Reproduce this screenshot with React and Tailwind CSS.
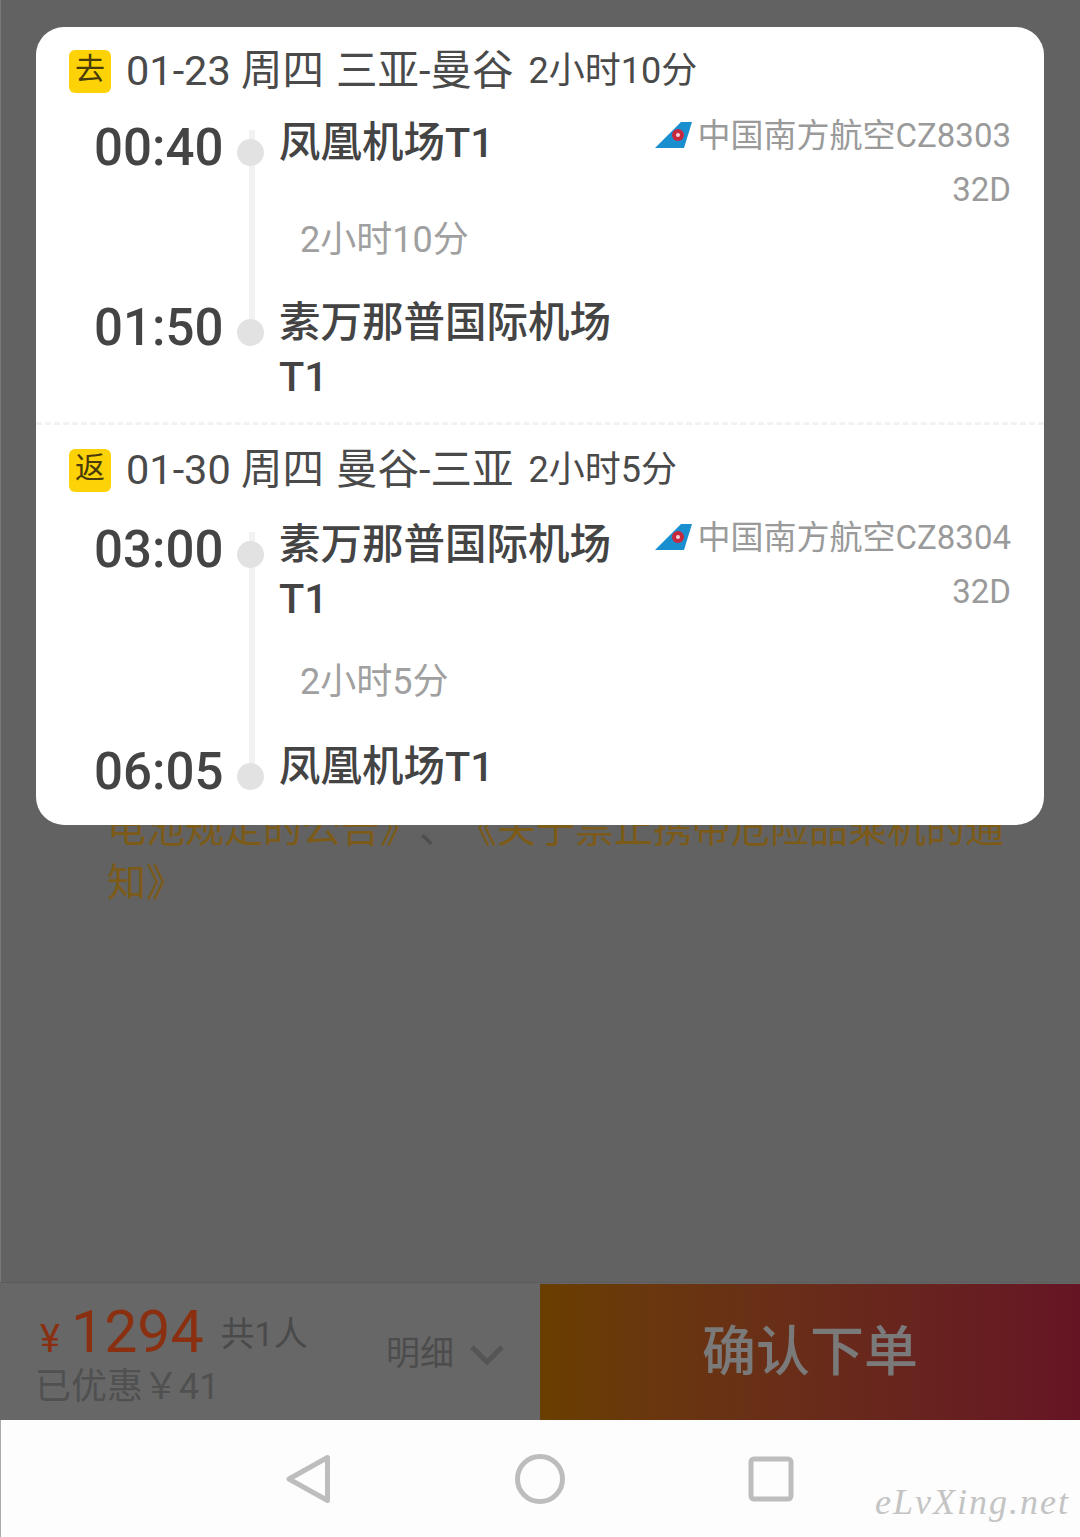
const font = { fontFamily: '"Roboto", "Noto Sans CJK SC", sans-serif' };

function TailLogo() {
    return (
        <svg width="38" height="28" viewBox="0 0 38 28" className="shrink-0">
            <polygon points="26,0 37,0 29,26 0,26" fill="#1a8fd0" />
            <circle cx="23" cy="13" r="6" fill="#c8283c" />
            <circle cx="23" cy="13" r="2" fill="#f4d6da" />
        </svg>
    );
}

function Header({ tag, date, route, duration, className }) {
    return (
        <div className={`flex items-center pl-[33px] h-[44px] ${className}`}>
            <span className="w-[42px] h-[43px] rounded-[6px] bg-[#fdd308] text-[#4a3c08] text-[30px] leading-[38px] flex justify-center shrink-0">{tag}</span>
            <span className="ml-[15px] text-[41.5px] leading-[44px] text-[#4a4a4a] whitespace-nowrap">{date}</span>
            <span className="ml-[12px] text-[41.5px] leading-[44px] text-[#4a4a4a] whitespace-nowrap">{route}</span>
            <span className="ml-[15px] text-[36px] leading-[44px] text-[#4a4a4a] whitespace-nowrap">{duration}</span>
        </div>
    );
}

function Stop({ time, station, carrier, seat }) {
    return (
        <div className="flex items-start">
            <div className="w-[201px] shrink-0 pl-[58px] text-[51px] leading-[64px] font-medium text-[#444444]">{time}</div>
            <div className="w-[42px] pt-[23px] shrink-0">
                <div className="relative w-[27px] h-[27px] rounded-full bg-[#e2e2e2]" />
            </div>
            <div className="w-[350px] shrink-0 text-[41.5px] leading-[54px] font-medium text-[#444444]">{station}</div>
            {carrier && (
                <div className="flex-1 -mt-[7px] pr-[33px] text-[33px] leading-[54px] text-[#9a9a9a] text-right whitespace-nowrap">
                    <div className="flex items-center justify-end gap-[5px] -ml-[40px]"><TailLogo />{carrier}</div>
                    <div>{seat}</div>
                </div>
            )}
        </div>
    );
}

function Leg({ from, to, duration, durationClass, lineClass }) {
    return (
        <div className="relative">
            <div className={`absolute left-[213px] top-[14px] w-[6px] bg-[#f2f2f2] ${lineClass}`} />
            <div className="relative">
                <Stop {...from} />
                <div className={`pl-[264px] text-[36px] leading-[54px] text-[#a0a0a0] ${durationClass}`}>{duration}</div>
                <Stop {...to} />
            </div>
        </div>
    );
}

export default function App() {
    return (
        <div style={font} className="relative w-[1080px] h-[1537px] overflow-hidden flex flex-col bg-[#626262]">
            {/* page behind the dialog */}
            <div className="flex-1 pl-[106px] pr-[70px] pt-[802px] text-[39px] leading-[54px] text-[#7c5a17] border-l border-[#777777] [text-spacing-trim:space-all]">
                电池规定的公告》<span className="text-[#4e4e4e]">、</span>《关于禁止携带危险品乘机的通知》
            </div>

            {/* price bar */}
            <div className="h-[138px] shrink-0 flex bg-[#676767] border-t border-[#5c5c5c]">
                <div className="w-[540px] flex pl-[35px] pt-[19px]">
                    <div className="w-[351px]">
                        <div className="flex items-baseline h-[60px]">
                            <span className="ml-[5px] text-[38px] leading-[60px] text-[#8a3010]">¥</span>
                            <span className="ml-[11px] text-[59px] leading-[60px] text-[#8a3010]">1294</span>
                            <span className="ml-[17px] -translate-y-[6px] text-[34px] leading-[60px] text-[#4a4a4a]">共1人</span>
                        </div>
                        <div className="mt-[1px] text-[36px] leading-[48px] text-[#505050] whitespace-nowrap">已优惠￥41</div>
                    </div>
                    <div className="flex items-center h-[100px] pt-[5px] -mt-[1px]">
                        <span className="text-[34px] text-[#4c4c4c]">明细</span>
                        <svg width="36" height="24" viewBox="0 0 36 24" className="ml-[15px] mt-[2px]">
                            <path d="M3 4 L18 19 L33 4" fill="none" stroke="#555555" strokeWidth="5" />
                        </svg>
                    </div>
                </div>
                <div className="flex-1 mt-[1px] flex items-center justify-center bg-gradient-to-r from-[#6a3e00] to-[#661424] text-[54px] font-medium text-[#7a7a7a]">
                    确认下单
                </div>
            </div>

            {/* android nav */}
            <div className="h-[117px] shrink-0 flex items-center justify-center gap-[183px] pr-[4px] bg-[#fdfdfd] border-l border-[#aaaaaa]">
                <svg width="48" height="54" viewBox="0 0 48 54">
                    <path d="M5 27 L43.5 5.5 L43.5 48.5 Z" fill="none" stroke="#bdbdbd" strokeWidth="5" strokeLinejoin="round" />
                </svg>
                <svg width="50" height="50" viewBox="0 0 50 50">
                    <circle cx="25" cy="25" r="22.5" fill="none" stroke="#bdbdbd" strokeWidth="5" />
                </svg>
                <svg width="46" height="46" viewBox="0 0 46 46">
                    <rect x="3" y="3" width="40" height="40" rx="3" fill="none" stroke="#bdbdbd" strokeWidth="5" />
                </svg>
            </div>
            <div className="absolute right-[10px] bottom-[17px] text-[36px] italic leading-none tracking-[2px] text-[#c4c4c4]" style={{ fontFamily: '"Liberation Serif", serif' }}>eLvXing.net</div>

            {/* flight detail dialog */}
            <div className="absolute left-[36px] top-[27px] w-[1008px] h-[798px] rounded-[28px] bg-white overflow-hidden">
                <Header className="mt-[22px]" tag="去" date="01-23 周四" route="三亚-曼谷" duration="2小时10分" />
                <div className="mt-[23px]">
                    <Leg
                        from={{ time: '00:40', station: '凤凰机场T1', carrier: '中国南方航空CZ8303', seat: '32D' }}
                        to={{ time: '01:50', station: <>素万那普国际机场<br />T1</> }}
                        duration="2小时10分"
                        durationClass="-mt-[4px] mb-[29px]"
                        lineClass="h-[202px]"
                    />
                </div>
                <div className="mt-[18px] border-t-[3px] border-dashed border-[#f2f2f2]" />
                <Header className="mt-[23px]" tag="返" date="01-30 周四" route="曼谷-三亚" duration="2小时5分" />
                <div className="mt-[26px]">
                    <Leg
                        from={{ time: '03:00', station: <>素万那普国际机场<br />T1</>, carrier: '中国南方航空CZ8304', seat: '32D' }}
                        to={{ time: '06:05', station: '凤凰机场T1' }}
                        duration="2小时5分"
                        durationClass="mt-[29px] mb-[31px]"
                        lineClass="h-[240px]"
                    />
                </div>
            </div>
        </div>
    );
}
